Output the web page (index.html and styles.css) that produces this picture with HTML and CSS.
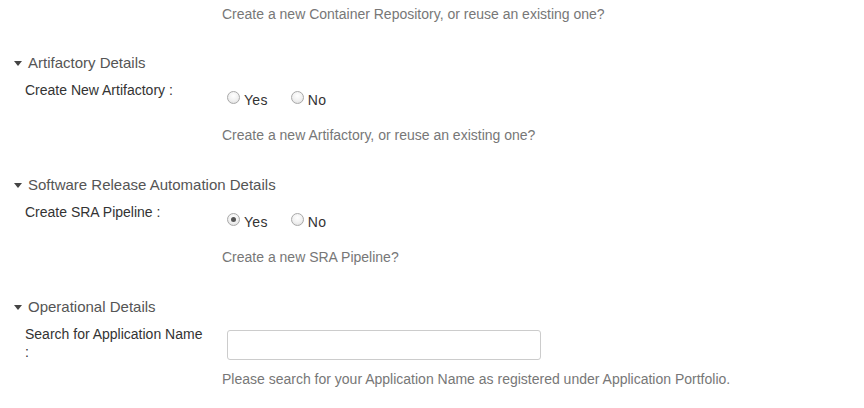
FILE: index.html
```html
<!DOCTYPE html>
<html>
<head>
<meta charset="utf-8">
<link rel="stylesheet" href="styles.css">
</head>
<body>
<div class="form">
  <div class="help help-top">Create a new Container Repository, or reuse an existing one?</div>

  <section class="section">
    <div class="heading"><span class="caret"></span>Artifactory Details</div>
    <div class="row">
      <div class="label">Create New Artifactory :</div>
      <div class="field">
        <div class="radios">
          <span class="radio-opt"><span class="radio"></span><span class="radio-text">Yes</span></span>
          <span class="radio-opt"><span class="radio"></span><span class="radio-text">No</span></span>
        </div>
        <div class="help">Create a new Artifactory, or reuse an existing one?</div>
      </div>
    </div>
  </section>

  <section class="section">
    <div class="heading"><span class="caret"></span>Software Release Automation Details</div>
    <div class="row">
      <div class="label">Create SRA Pipeline :</div>
      <div class="field">
        <div class="radios">
          <span class="radio-opt"><span class="radio checked"></span><span class="radio-text">Yes</span></span>
          <span class="radio-opt"><span class="radio"></span><span class="radio-text">No</span></span>
        </div>
        <div class="help">Create a new SRA Pipeline?</div>
      </div>
    </div>
  </section>

  <section class="section">
    <div class="heading"><span class="caret"></span>Operational Details</div>
    <div class="row">
      <div class="label label-wrap">Search for Application Name :</div>
      <div class="field">
        <div class="input"></div>
        <div class="help help-input">Please search for your Application Name as registered under Application Portfolio.</div>
      </div>
    </div>
  </section>
</div>
</body>
</html>
```

FILE: styles.css
```css
html, body {
  margin: 0;
  padding: 0;
  background: #ffffff;
}
body {
  font-family: "Liberation Sans", Arial, sans-serif;
  font-size: 14px;
  color: #333333;
}
.form {
  padding-top: 4px;
  width: 864px;
}
.help {
  color: #777777;
  font-size: 14px;
  line-height: 20px;
  margin-top: 15px;
}
.help-top {
  margin-top: 0;
  padding-left: 222px;
}
.section {
  margin-top: 29px;
}
.section + .section {
  margin-top: 30px;
}
.heading {
  display: flex;
  align-items: center;
  font-size: 15px;
  line-height: 20px;
  color: #555555;
  padding-left: 14px;
}
.caret {
  width: 0;
  height: 0;
  border-left: 4px solid transparent;
  border-right: 4px solid transparent;
  border-top: 5px solid #444444;
  margin-right: 6px;
  margin-top: 1px;
}
.row {
  display: flex;
  margin-top: 7px;
}
.label {
  width: 197px;
  padding-left: 25px;
  line-height: 20px;
  color: #333333;
  flex-shrink: 0;
}
.label-wrap {
  width: 182px;
  padding-right: 15px;
  line-height: 18px;
  margin-top: 1px;
}
.field {
  flex: 1;
}
.radios {
  display: flex;
  margin-top: 10px;
  height: 20px;
}
.radio-opt {
  display: flex;
  align-items: flex-start;
  margin-right: 18px;
}
.radio {
  width: 11px;
  height: 11px;
  border: 1px solid #a9a9a9;
  border-radius: 50%;
  background: radial-gradient(circle at 50% 35%, #ffffff 0%, #f0f0f0 55%, #d8d8d8 100%);
  margin: 1px 4px 0 5px;
  position: relative;
  flex-shrink: 0;
}
.radio.checked::after {
  content: "";
  position: absolute;
  left: 3px;
  top: 3px;
  width: 5px;
  height: 5px;
  border-radius: 50%;
  background: #555555;
}
.radio-text {
  line-height: 20px;
  color: #333333;
  letter-spacing: 0.3px;
}
.input {
  width: 312px;
  height: 28px;
  border: 1px solid #cccccc;
  border-radius: 3px;
  margin-left: 5px;
  margin-top: 6px;
  background: #ffffff;
}
.help-input {
  margin-top: 9px;
}
```
